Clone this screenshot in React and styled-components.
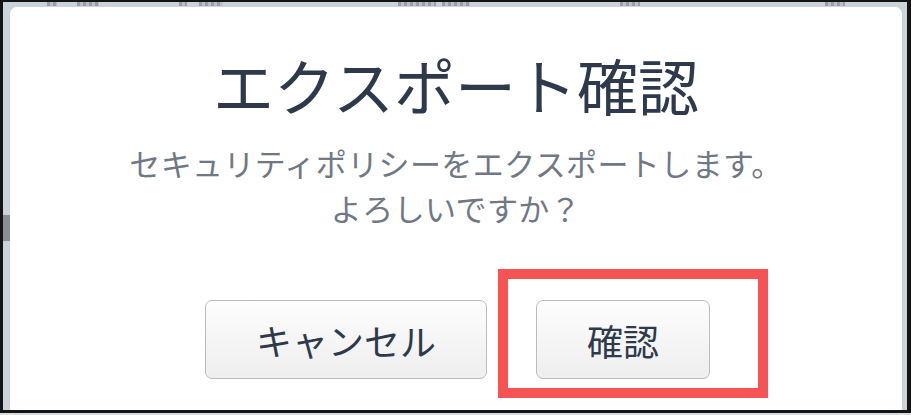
import React from "react";
import styled, { createGlobalStyle } from "styled-components";

const Global = createGlobalStyle`
  html, body { margin: 0; padding: 0; background: #d9dcdf; }
  body { font-family: "Noto Sans CJK JP", "Noto Sans", sans-serif; }
`;

const Frame = styled.div`
  width: 911px;
  height: 413px;
  box-sizing: border-box;
  border-style: solid;
  border-color: #141414;
  border-width: 2px 4px 3px 3px;
  background: #cbd3da;
  overflow: hidden;
  display: flex;
  flex-direction: column;
`;

const HeaderStrip = styled.div`
  height: 5px;
  flex: none;
  display: flex;
  align-items: flex-start;
  padding-left: 44px;
`;

const HeaderMark = styled.div`
  flex: none;
  width: ${(p) => p.$w}px;
  height: 4px;
  margin-left: ${(p) => p.$gap}px;
  background: repeating-linear-gradient(
    90deg,
    #8a919a 0 3px,
    #b4bbc3 3px 6px
  );
  opacity: 0.8;
`;

const Body = styled.div`
  flex: 1;
  display: flex;
  min-height: 0;
`;

const SideStrip = styled.div`
  width: 7px;
  flex: none;
  display: flex;
  flex-direction: column;
  padding-top: 208px;
`;

const Thumb = styled.div`
  height: 26px;
  background: #8a8d91;
`;

const Dialog = styled.div`
  flex: none;
  width: 892px;
  background: #ffffff;
  border-radius: 7px 7px 0 0;
  display: flex;
  flex-direction: column;
  align-items: center;
  padding-top: 41px;
  box-sizing: border-box;
`;

const Title = styled.h1`
  margin: 0;
  font-weight: 400;
  font-size: 61px;
  line-height: 73px;
  color: #2e3a4b;
`;

const Message = styled.p`
  margin: 19px 0 0;
  font-size: 31px;
  line-height: 45px;
  color: #6f7884;
  text-align: center;
  letter-spacing: 0.4px;
`;

const Actions = styled.div`
  display: flex;
  gap: 49px;
  margin-top: 70px;
  margin-left: 3px;
`;

const Button = styled.button`
  width: ${(p) => p.$w}px;
  height: 79px;
  box-sizing: border-box;
  border: 1px solid #b9bbbe;
  border-radius: 7px;
  background: linear-gradient(#fdfdfd, #eeeeee);
  box-shadow: inset 0 1px 0 #ffffff;
  font-family: "Noto Sans CJK JP", "Noto Sans", sans-serif;
  font-size: 36px;
  color: #2e3a4b;
  padding: 0;
  cursor: pointer;
`;

const Highlight = styled.div`
  position: relative;
`;

const RedBox = styled.div`
  position: absolute;
  left: -38px;
  top: -31px;
  width: 270px;
  height: 129px;
  box-sizing: border-box;
  border: 10px solid #f65454;
  pointer-events: none;
`;

const headerMarks = [
  { gap: 0, w: 10 },
  { gap: 20, w: 22 },
  { gap: 80, w: 8 },
  { gap: 12, w: 24 },
  { gap: 175, w: 38 },
  { gap: 6, w: 28 },
  { gap: 150, w: 20 },
  { gap: 185, w: 20 },
  { gap: 245, w: 52 },
];

export default function App() {
  return (
    <>
      <Global />
      <Frame>
        <HeaderStrip>
          {headerMarks.map((m, i) => (
            <HeaderMark key={i} $gap={m.gap} $w={m.w} />
          ))}
        </HeaderStrip>
        <Body>
          <SideStrip>
            <Thumb />
          </SideStrip>
          <Dialog>
            <Title>エクスポート確認</Title>
            <Message>
              セキュリティポリシーをエクスポートします。
              <br />
              よろしいですか？
            </Message>
            <Actions>
              <Button $w={282}>キャンセル</Button>
              <Highlight>
                <Button $w={174}>確認</Button>
                <RedBox />
              </Highlight>
            </Actions>
          </Dialog>
        </Body>
      </Frame>
    </>
  );
}
